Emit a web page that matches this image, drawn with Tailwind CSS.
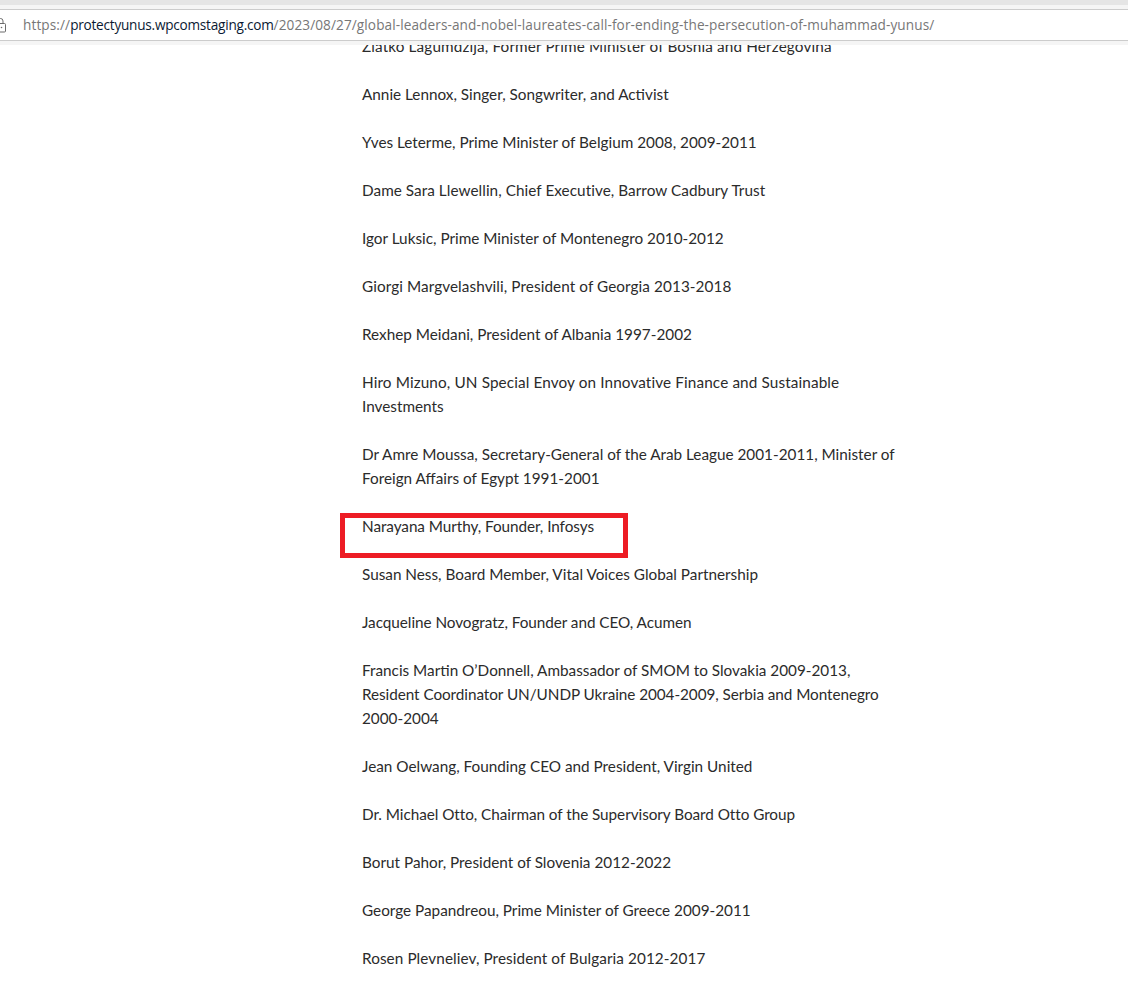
<!DOCTYPE html>
<html lang="en">
<head>
    <meta charset="UTF-8">
    <meta name="viewport" content="width=device-width, initial-scale=1.0">
    <title>Global leaders and Nobel laureates</title>
    <script src="https://cdn.jsdelivr.net/npm/@tailwindcss/browser@4"></script>
</head>
<body class="bg-white h-[996px] overflow-hidden relative font-['Open_Sans',sans-serif]">
    <!-- browser chrome -->
    <div class="relative z-10 bg-[#f5f5f5] h-[45px]">
        <div class="bg-[#e5e5e5] h-[5px]"></div>
        <div class="h-[4px]"></div>
        <div class="bg-white h-[32px] border-y border-[#cccccc] flex items-center">
            <svg class="ml-[-6px] w-[12px] h-[15px] shrink-0" viewBox="0 0 12 15" fill="none" stroke="#6b6b6b" stroke-width="1">
                <rect x="1.5" y="5.5" width="10" height="8.5" rx="1"></rect>
                <path d="M4 5.5V3a2.5 2.5 0 0 1 5 0v2.5"></path>
                <circle cx="7.5" cy="9.5" r="0.8" fill="#6b6b6b" stroke="none"></circle>
            </svg>
            <p class="ml-[17px] text-[13.62px] tracking-[0.09px] text-[#777] whitespace-nowrap">https://<span class="text-[#0b1a33] tracking-[-0.24px]">protectyunus.wpcomstaging.com</span>/2023/08/27/global-leaders-and-nobel-laureates-call-for-ending-the-persecution-of-muhammad-yunus/</p>
        </div>
    </div>

    <!-- article -->
    <main class="ml-[362px] w-[560px] -mt-[11px] text-[15.3px] leading-[24px] text-[#2b2b2b] flex flex-col gap-[24px] font-['Lato',sans-serif]">
        <p class="tracking-[0.13px]">Zlatko Lagumdzija, Former Prime Minister of Bosnia and Herzegovina</p>
        <p>Annie Lennox, Singer, Songwriter, and Activist</p>
        <p>Yves Leterme, Prime Minister of Belgium 2008, 2009-2011</p>
        <p class="tracking-[0.05px]">Dame Sara Llewellin, Chief Executive, Barrow Cadbury Trust</p>
        <p>Igor Luksic, Prime Minister of Montenegro 2010-2012</p>
        <p class="tracking-[0.08px]">Giorgi Margvelashvili, President of Georgia 2013-2018</p>
        <p>Rexhep Meidani, President of Albania 1997-2002</p>
        <p><span class="tracking-[0.12px]">Hiro Mizuno, UN Special Envoy on Innovative Finance and Sustainable</span><br>Investments</p>
        <p>Dr Amre Moussa, Secretary-General of the Arab League 2001-2011, Minister of<br>Foreign Affairs of Egypt 1991-2001</p>
        <p class="tracking-[-0.06px]">Narayana Murthy, Founder, Infosys</p>
        <p>Susan Ness, Board Member, Vital Voices Global Partnership</p>
        <p class="tracking-[-0.05px]">Jacqueline Novogratz, Founder and CEO, Acumen</p>
        <p>Francis Martin O’Donnell, Ambassador of SMOM to Slovakia 2009-2013,<br><span class="tracking-[-0.06px]">Resident Coordinator UN/UNDP Ukraine 2004-2009, Serbia and Montenegro</span><br>2000-2004</p>
        <p>Jean Oelwang, Founding CEO and President, Virgin United</p>
        <p class="tracking-[-0.05px]">Dr. Michael Otto, Chairman of the Supervisory Board Otto Group</p>
        <p>Borut Pahor, President of Slovenia 2012-2022</p>
        <p>George Papandreou, Prime Minister of Greece 2009-2011</p>
        <p class="tracking-[0.08px]">Rosen Plevneliev, President of Bulgaria 2012-2017</p>
    </main>

    <!-- red highlight drawn on top of the screenshot -->
    <div class="absolute left-[340px] top-[513px] w-[288px] h-[45px] border-[5px] border-[#ed1c24]"></div>
</body>
</html>
